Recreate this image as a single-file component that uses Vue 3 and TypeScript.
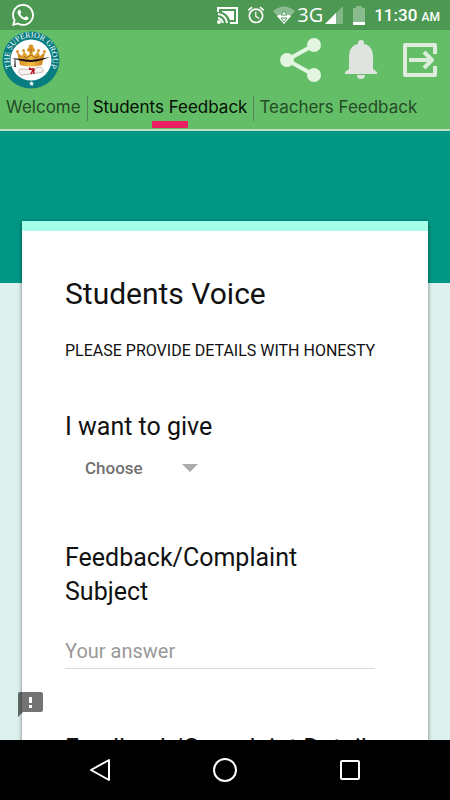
<script setup lang="ts">
import { ref } from 'vue'

const tabs: string[] = ['Welcome', 'Students Feedback', 'Teachers Feedback']
const activeTab = ref<string>('Students Feedback')
const kind = ref<string>('')
const subject = ref<string>('')
</script>

<template>
  <div class="screen">
    <div class="status">
      <svg class="whatsapp" width="22" height="22" viewBox="0 0 24 24" aria-hidden="true">
        <path d="M17.47 14.38c-.3-.15-1.76-.87-2.03-.97-.27-.1-.47-.15-.67.15-.2.3-.77.97-.94 1.16-.17.2-.35.22-.64.08-.3-.15-1.26-.46-2.39-1.48-.88-.79-1.48-1.76-1.65-2.06-.17-.3-.02-.46.13-.6.13-.14.3-.35.44-.53.15-.17.2-.3.3-.49.1-.2.05-.37-.02-.52-.08-.15-.67-1.61-.92-2.21-.24-.58-.49-.5-.67-.51h-.57c-.2 0-.52.07-.79.37-.27.3-1.04 1.02-1.04 2.48s1.07 2.88 1.21 3.07c.15.2 2.1 3.2 5.08 4.49.71.31 1.26.49 1.69.63.71.22 1.36.19 1.87.12.57-.09 1.76-.72 2.01-1.42.25-.69.25-1.29.17-1.41-.07-.12-.27-.2-.57-.35zM12.05 21.8a9.87 9.87 0 0 1-5.03-1.38l-.36-.21-3.74.98 1-3.65-.24-.37a9.86 9.86 0 0 1-1.51-5.26C2.17 6.44 6.6 2 12.06 2a9.83 9.83 0 0 1 9.88 9.89c0 5.45-4.44 9.91-9.89 9.91zM20.46 3.49A11.82 11.82 0 0 0 12.05 0C5.5 0 .16 5.34.16 11.89c0 2.1.55 4.14 1.59 5.95L.06 24l6.3-1.65a11.88 11.88 0 0 0 5.69 1.45c6.55 0 11.89-5.34 11.89-11.9 0-3.17-1.23-6.16-3.48-8.41z" />
      </svg>
      <div class="signals">
        <svg width="21" height="17" viewBox="0 0 21 17" aria-hidden="true">
          <path d="M1 5V1h19v15h-7" fill="none" stroke="#fff" stroke-width="2" />
          <path d="M5 4h12v9h-4q-2-6-8-8z" />
          <path d="M1 7q8 1 9 9M1 11q4 1 5 5" fill="none" stroke="#fff" stroke-width="2" />
          <circle cx="2" cy="15" r="2" />
        </svg>
        <svg class="alarm" width="20" height="20" viewBox="0 0 24 24" aria-hidden="true">
          <path d="M22 5.700l-4.600-3.900-1.300 1.500 4.600 3.900L22 5.700zM7.900 3.400L6.600 1.900 2 5.700l1.300 1.500 4.600-3.800zM12.500 8H11v6l4.700 2.900.8-1.200-4-2.400V8zM12 4a9 9 0 1 0 0 18 9 9 0 0 0 0-18zm0 16a7 7 0 1 1 0-14 7 7 0 0 1 0 14z" />
        </svg>
        <svg class="wifi" width="22" height="18" viewBox="0 0 22 18" aria-hidden="true">
          <path d="M0 5Q11-4 22 5L11 18z" opacity="0.35" />
          <path d="M4 10q7-5 14 0l-7 8z" />
          <path d="M8 9l3-4 3 4zM8 12h6l-3 4z" stroke="#4d9853" />
        </svg>
        <span class="network">3G</span>
        <svg class="cell" width="18" height="18" viewBox="0 0 18 18" aria-hidden="true">
          <path d="M18 0v18H0z" opacity="0.3" />
          <path d="M11 7v11H0z" />
        </svg>
        <svg class="battery" width="12" height="19" viewBox="0 0 12 19" aria-hidden="true">
          <path d="M0 2h3V0h6v2h3v17H0z" opacity="0.35" />
          <path d="M0 16h12v3H0z" />
        </svg>
        <span class="clock">11:30 <small>AM</small></span>
      </div>
    </div>

    <header class="appbar">
      <div class="brand">
        <svg class="logo" width="58" height="58" viewBox="0 0 58 58" role="img" aria-label="The Superior Group">
          <defs>
            <path id="ring" d="M9.300 36.500A21.500 21.500 0 1 1 48.700 36.500" />
            <linearGradient id="gold" x1="0" x2="1">
              <stop offset="0" stop-color="#c9851c" />
              <stop offset="0.5" stop-color="#f5bd45" />
              <stop offset="1" stop-color="#c27a13" />
            </linearGradient>
          </defs>
          <circle cx="29" cy="29" r="28.500" fill="#087d80" />
          <circle cx="29" cy="29" r="20.500" fill="#fff" />
          <text class="ringtext"><textPath href="#ring" startOffset="50%" text-anchor="middle">THE SUPERIOR GROUP</textPath></text>
          <path d="M18 34l-3-13 5 4 2-5 4 5 2-5h2l2 5 4-5 2 5 5-4-3 13q-11 3-22 0z" fill="url(#gold)" />
          <g fill="#d99225">
            <circle cx="15.500" cy="20.500" r="1.500" />
            <circle cx="21.500" cy="19.500" r="1.500" />
            <circle cx="36.500" cy="19.500" r="1.500" />
            <circle cx="42.500" cy="20.500" r="1.500" />
            <circle cx="29" cy="16" r="2.500" />
            <circle cx="27" cy="19" r="2" />
            <circle cx="31" cy="19" r="2" />
          </g>
          <path d="M22 25l2 2 5-3 5 3 2-2M29 18v5" fill="none" stroke="#9b6012" />
          <path d="M10 27q10 1 19 2 9-1 19-3l-8 3q-6 2-11 2-8 0-19-4z" fill="#181218" />
          <path d="M13 28v6" stroke="#221b20" />
          <path d="M13 32l-1 4h2z" fill="#221b20" />
          <path d="M18 38q11 2 20-2 4 1 3 5-10 2-22 3-4-3-1-6z" fill="#f8f2f1" stroke="#c9b7b7" />
          <path d="M27 37l4 2-2 4M31 37l1 6M27 38l6 1" fill="none" stroke="#b51222" stroke-width="1.500" />
          <path d="M29.500 50l.8 1.600 1.700.2-1.200 1.200.3 1.800-1.600-.9-1.500.9.300-1.800-1.300-1.200 1.800-.2z" fill="#fff" />
        </svg>
        <div class="actions">
          <button type="button" aria-label="Share">
            <svg width="42" height="44" viewBox="0 0 42 44">
              <path d="M34 7L7 22l27 15" fill="none" stroke="#e2f5e1" stroke-width="4" />
              <circle cx="34" cy="7" r="7" fill="#e2f5e1" />
              <circle cx="7" cy="22" r="7" fill="#e2f5e1" />
              <circle cx="34" cy="37" r="7" fill="#e2f5e1" />
            </svg>
          </button>
          <button type="button" aria-label="Notifications">
            <svg width="34" height="40" viewBox="0 0 34 40">
              <path d="M0 34v-2l4-3V17C4 10 7 5 13 4V3a3 3 0 0 1 6 0v1c6 1 9 6 9 13v12l4 3v2zM12 35h8a4 4 0 0 1-8 0z" fill="#e0e4e0" />
            </svg>
          </button>
          <button type="button" aria-label="Sign out">
            <svg width="36" height="36" viewBox="0 0 36 36">
              <path d="M33 12V3H3v30h30v-9M7 18h23M22 10l8 8-8 8" fill="none" stroke="#dceedb" stroke-width="4" stroke-linejoin="round" />
            </svg>
          </button>
        </div>
      </div>
      <nav class="tabs" aria-label="Sections">
        <button
          v-for="tab in tabs"
          :key="tab"
          type="button"
          :class="['tab', { active: tab === activeTab }]"
          @click="activeTab = tab"
        >{{ tab }}</button>
      </nav>
    </header>

    <main class="page">
      <form class="card" @submit.prevent>
        <h1>Students Voice</h1>
        <p class="intro">PLEASE PROVIDE DETAILS WITH HONESTY</p>

        <div class="field">
          <label for="kind">I want to give</label>
          <div class="picker">
            <select id="kind" v-model="kind">
              <option value="">Choose</option>
            </select>
            <svg width="16" height="8" viewBox="0 0 16 8" aria-hidden="true"><path d="M0 0h16L8 8z" fill="#acacac" /></svg>
          </div>
        </div>

        <div class="field subject">
          <label for="subject">Feedback/Complaint Subject</label>
          <input id="subject" v-model="subject" type="text" placeholder="Your answer" />
        </div>

        <div class="field details">
          <label for="details">Feedback/Complaint Details</label>
          <textarea id="details" rows="3"></textarea>
        </div>
      </form>
      <button class="report" type="button" aria-label="Report a problem">
        <svg width="25" height="25" viewBox="0 0 25 25">
          <path d="M0 25V2Q0 0 2 0h21q2 0 2 2v16q0 2-2 2H5z" fill="#000" opacity="0.55" />
          <path d="M11 5h3v6h-3zM11 13h3v3h-3z" fill="#fff" />
        </svg>
      </button>
    </main>

    <nav class="system" aria-label="System">
      <button type="button" aria-label="Back">
        <svg width="24" height="26" viewBox="0 0 24 26"><path d="M21 3v20L3 13z" /></svg>
      </button>
      <button type="button" aria-label="Home">
        <svg width="26" height="26" viewBox="0 0 26 26"><circle cx="13" cy="13" r="11" /></svg>
      </button>
      <button type="button" aria-label="Recent apps">
        <svg width="24" height="24" viewBox="0 0 24 24"><rect x="3" y="3" width="18" height="18" rx="1" /></svg>
      </button>
    </nav>
  </div>
</template>

<style>
body {
  margin: 0;
}
</style>

<style scoped>
.screen {
  display: flex;
  flex-direction: column;
  height: 100vh;
  overflow: hidden;
  font-family: Roboto, "Liberation Sans", sans-serif;
  color: #111;
}

button {
  padding: 0;
  border: 0;
  background: none;
  font: inherit;
  color: inherit;
}

svg {
  display: block;
  flex: none;
}

.status {
  display: flex;
  flex: none;
  align-items: center;
  justify-content: space-between;
  height: 30px;
  padding: 0 10px 0 12px;
  background: #4d9853;
  color: #fff;
  fill: #fff;
}

.signals {
  display: flex;
  align-items: center;
}

.alarm {
  margin-left: 8px;
}

.wifi {
  margin-left: 7px;
}

.network {
  margin-left: 2px;
  font-family: "Open Sans", sans-serif;
  font-size: 20px;
  line-height: 30px;
}

.cell {
  margin-left: 2px;
}

.battery {
  margin-left: 10px;
}

.clock {
  margin-left: 9px;
  padding-top: 3px;
  font-size: 17px;
  font-weight: 500;
  line-height: 27px;
  white-space: nowrap;
}

.clock small {
  font-size: 12px;
}

.appbar {
  flex: none;
  border-bottom: 2px solid #c3dcc4;
  background: #64be67;
}

.brand {
  display: flex;
  align-items: center;
  justify-content: space-between;
  height: 60px;
  padding: 0 12px 0 2px;
}

.ringtext {
  font-family: "Liberation Serif", serif;
  font-size: 8px;
  fill: #fff;
}

.actions {
  display: flex;
  align-items: center;
  gap: 23px;
}

.tabs {
  display: flex;
  align-items: flex-start;
  height: 39px;
}

.tab {
  position: relative;
  height: 39px;
  padding: 0 6px 5px;
  font-family: Inter, sans-serif;
  font-size: 17px;
  line-height: 34px;
  white-space: nowrap;
  color: #254b27;
}

.tab + .tab::before {
  content: "";
  position: absolute;
  top: 6px;
  left: 0;
  width: 1px;
  height: 25px;
  background: #548457;
}

.tab.active {
  color: #050f05;
}

.tab.active::after {
  content: "";
  position: absolute;
  bottom: 1px;
  left: 50%;
  width: 36px;
  height: 7px;
  margin-left: -18px;
  background: #e91e63;
}

.page {
  position: relative;
  flex: 1;
  min-height: 0;
  overflow: hidden;
  padding: 90px 22px 0;
  background: linear-gradient(#009784 152px, #ddf1ee 152px);
}

.card {
  padding: 43px 42px 40px 43px;
  border-top: 10px solid #a5ffe8;
  background: #fff;
  box-shadow: 0 1px 4px rgba(0, 0, 0, 0.5);
}

h1 {
  margin: 0;
  font-size: 30px;
  font-weight: 400;
  line-height: 40px;
}

.intro {
  margin: 25px 0 0;
  font-size: 16px;
  line-height: 24px;
  white-space: nowrap;
}

.field {
  display: flex;
  flex-direction: column;
  margin-top: 47px;
}

.field label {
  font-size: 25px;
  line-height: 34px;
}

.picker {
  display: flex;
  align-items: center;
  width: 113px;
  height: 48px;
  padding-left: 20px;
}

.picker select {
  flex: 1;
  min-width: 0;
  padding: 0;
  border: 0;
  appearance: none;
  background: none;
  font-family: inherit;
  font-size: 17px;
  font-weight: 500;
  line-height: 24px;
  color: #717171;
}

.field.subject {
  margin-top: 49px;
}

.field input {
  width: 100%;
  max-width: 310px;
  height: 36px;
  margin-top: 24px;
  padding: 0;
  border: 0;
  border-bottom: 1px solid #dcdcdc;
  box-sizing: border-box;
  font-family: inherit;
  font-size: 20px;
  color: #111;
}

.field input::placeholder {
  color: #999;
  opacity: 1;
}

.field.details {
  margin-top: 63px;
  white-space: nowrap;
}

.field textarea {
  border: 0;
  border-bottom: 1px solid #dcdcdc;
  resize: none;
}

.report {
  position: absolute;
  bottom: 23px;
  left: 18px;
}

.system {
  display: flex;
  flex: none;
  align-items: center;
  justify-content: center;
  gap: 65px;
  height: 60px;
  background: #000;
}

.system button {
  display: grid;
  place-items: center;
  width: 60px;
  height: 60px;
}

.system svg {
  fill: none;
  stroke: #fff;
  stroke-width: 2;
  stroke-linejoin: round;
}
</style>
